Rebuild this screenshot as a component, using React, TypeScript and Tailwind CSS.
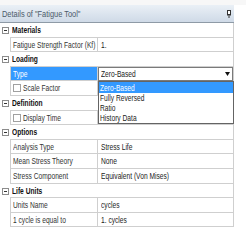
import React from "react";

type Row =
  | { kind: "section"; label: string; h: number }
  | { kind: "prop"; label: string; value: string; h: number; check?: boolean; selected?: boolean; combo?: boolean };

const rows: Row[] = [
  { kind: "section", label: "Materials", h: 15 },
  { kind: "prop", label: "Fatigue Strength Factor (Kf)", value: "1.", h: 14 },
  { kind: "section", label: "Loading", h: 15 },
  { kind: "prop", label: "Type", value: "Zero-Based", h: 14, selected: true, combo: true },
  { kind: "prop", label: "Scale Factor", value: "", h: 15, check: true },
  { kind: "section", label: "Definition", h: 15 },
  { kind: "prop", label: "Display Time", value: "", h: 14, check: true },
  { kind: "section", label: "Options", h: 15 },
  { kind: "prop", label: "Analysis Type", value: "Stress Life", h: 14 },
  { kind: "prop", label: "Mean Stress Theory", value: "None", h: 15 },
  { kind: "prop", label: "Stress Component", value: "Equivalent (Von Mises)", h: 15 },
  { kind: "section", label: "Life Units", h: 14 },
  { kind: "prop", label: "Units Name", value: "cycles", h: 15 },
  { kind: "prop", label: "1 cycle is equal to", value: "1. cycles", h: 14 },
];

function T({ children, className = "" }: { children: React.ReactNode; className?: string }) {
  return (
    <span className={"inline-block whitespace-nowrap origin-left scale-x-[0.7] leading-none " + className}>
      {children}
    </span>
  );
}

function Minus() {
  return (
    <div className="w-[7px] h-[7px] border border-[#8c8c8c] bg-white flex items-center justify-center">
      <div className="w-[3px] h-px bg-[#333]" />
    </div>
  );
}

export default function App() {
  return (
    <div className="w-[246px] h-[247px] bg-white relative overflow-hidden font-['Liberation_Sans',Arial,sans-serif] text-[9.5px] text-[#222]">
      <div className="h-[5px] bg-[#f7f7f7]" />
      <div className="w-[234px]">
        <div className="h-[18px] bg-gradient-to-b from-[#eaf0f6] to-[#cfdae7] border-b border-[#8e9aa6] flex items-center justify-between pl-[2px] pr-[3px]">
          <span className="inline-block whitespace-nowrap origin-left scale-x-[0.78] leading-none text-[#4b5a69]">
            Details of "Fatigue Tool"
          </span>
          <svg width="4" height="8" viewBox="0 0 4 8">
            <rect x="0.5" y="0.5" width="3" height="4" fill="#fff" stroke="#333" strokeWidth="1" />
            <rect x="0" y="4.5" width="4" height="1" fill="#333" />
            <rect x="1.5" y="5.5" width="1" height="2.5" fill="#333" />
          </svg>
        </div>
        {rows.map((r, i) =>
          r.kind === "section" ? (
            <div key={i} className="flex" style={{ height: r.h }}>
              <div className="w-[10px] shrink-0 flex items-center justify-start pl-[2px]">
                <Minus />
              </div>
              <div className="flex-1 flex items-center border-b border-r border-[#cfcfcf] pl-[2px]">
                <T className="font-bold text-[#111]">{r.label}</T>
              </div>
            </div>
          ) : (
            <div key={i} className="flex" style={{ height: r.h }}>
              <div className="w-[10px] shrink-0" />
              <div className="flex-1 flex border-l border-b border-r border-[#cfcfcf]">
                <div
                  className={
                    "w-[87px] shrink-0 flex items-center border-r border-[#cfcfcf] " +
                    (r.selected ? "bg-[#3399ff] text-white pl-[2px]" : "text-[#333] pl-[2px]")
                  }
                >
                  {r.check && (
                    <div className="w-[8px] h-[8px] border border-[#a0a0a0] bg-white shrink-0 mr-[2px]" />
                  )}
                  <T>{r.label}</T>
                </div>
                {r.combo ? (
                  <div className="flex-1 flex items-center border border-[#7a7a7a] bg-white pl-[2px] -mb-px">
                    <T className="flex-1">{r.value}</T>
                    <div className="w-[9px] h-full flex items-center justify-center ml-auto">
                      <svg width="5" height="4" viewBox="0 0 5 4">
                        <path d="M0 0h5L2.5 4z" fill="#111" />
                      </svg>
                    </div>
                  </div>
                ) : (
                  <div className="flex-1 flex items-center pl-[3px] text-[#222]">
                    <T>{r.value}</T>
                  </div>
                )}
              </div>
            </div>
          )
        )}
      </div>
      <div className="absolute left-[98px] top-[81px] w-[136px] h-[43px] border border-[#646464] bg-white flex flex-col">
        <div className="h-[11px] bg-[#3399ff] text-white flex items-center pl-[1px]">
          <T>Zero-Based</T>
        </div>
        <div className="h-[10px] flex items-center pl-[1px]">
          <T>Fully Reversed</T>
        </div>
        <div className="h-[10px] flex items-center pl-[1px]">
          <T>Ratio</T>
        </div>
        <div className="h-[10px] flex items-center pl-[1px]">
          <T>History Data</T>
        </div>
      </div>
    </div>
  );
}
